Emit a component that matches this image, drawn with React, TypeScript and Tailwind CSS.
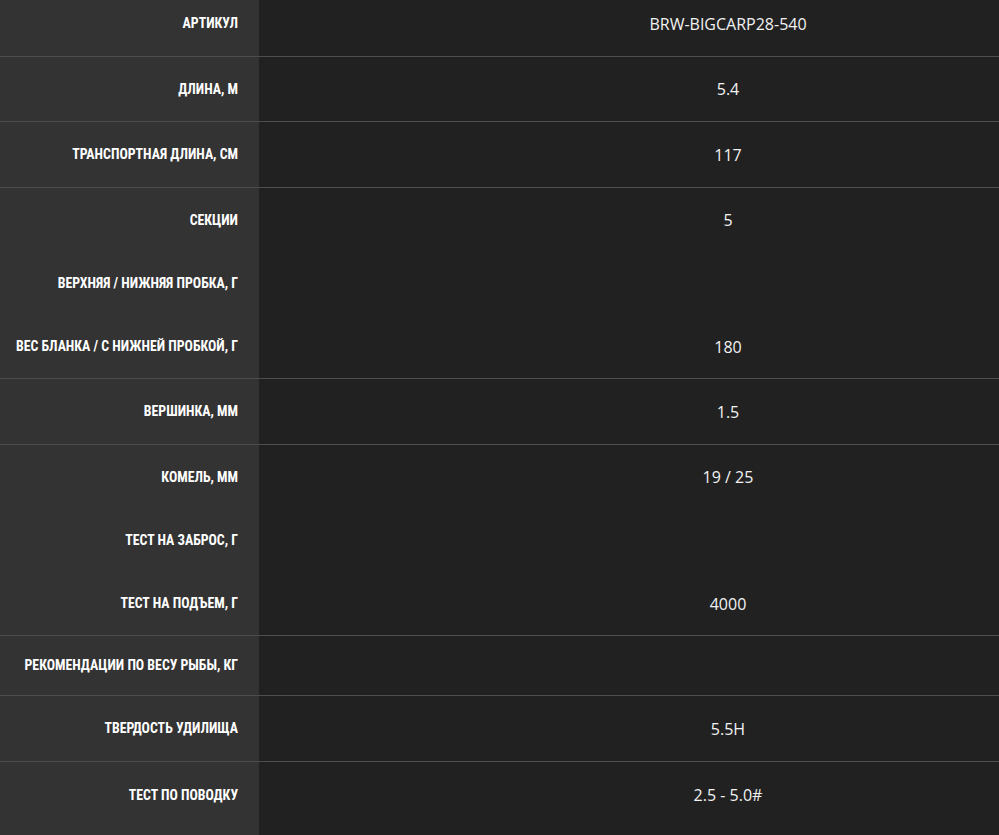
type Row = { label: string; value: string; h: string; border: boolean };

const rows: Row[] = [
  { label: "Артикул", value: "BRW-BIGCARP28-540", h: "h-[66px]", border: true },
  { label: "Длина, м", value: "5.4", h: "h-[65px]", border: true },
  { label: "Транспортная длина, см", value: "117", h: "h-[66px]", border: true },
  { label: "Секции", value: "5", h: "h-[64px]", border: false },
  { label: "Верхняя / нижняя пробка, г", value: "", h: "h-[63px]", border: false },
  { label: "Вес бланка / с нижней пробкой, г", value: "180", h: "h-[64px]", border: true },
  { label: "Вершинка, мм", value: "1.5", h: "h-[66px]", border: true },
  { label: "Комель, мм", value: "19 / 25", h: "h-[64px]", border: false },
  { label: "Тест на заброс, г", value: "", h: "h-[63px]", border: false },
  { label: "Тест на подъем, г", value: "4000", h: "h-[64px]", border: true },
  { label: "Рекомендации по весу рыбы, кг", value: "", h: "h-[60px]", border: true },
  { label: "Твердость удилища", value: "5.5H", h: "h-[66px]", border: true },
  { label: "Тест по поводку", value: "2.5 - 5.0#", h: "h-[66px]", border: false },
];

export default function App() {
  return (
    <div className="h-[835px] w-[999px] overflow-hidden bg-[#212121]">
      <div className="-mt-[9px] flex flex-col">
        {rows.map((r) => (
          <div
            key={r.label}
            className={`flex ${r.h} ${r.border ? "border-b border-[#4d4d4d]" : ""}`}
          >
            <div className="flex w-[259px] shrink-0 items-center justify-end bg-[#333333] pr-[21px] font-['Roboto_Condensed',Roboto,sans-serif] text-[13.8px] font-bold uppercase text-white">
              {r.label}
            </div>
            <div className="flex flex-1 items-center justify-center bg-[#212121] pl-[198px] font-['Open_Sans',sans-serif] text-[16px] text-[#f2f2f2]">
              {r.value}
            </div>
          </div>
        ))}
        <div className="flex h-[40px]">
          <div className="w-[259px] shrink-0 bg-[#333333]" />
          <div className="flex-1 bg-[#212121]" />
        </div>
      </div>
    </div>
  );
}
